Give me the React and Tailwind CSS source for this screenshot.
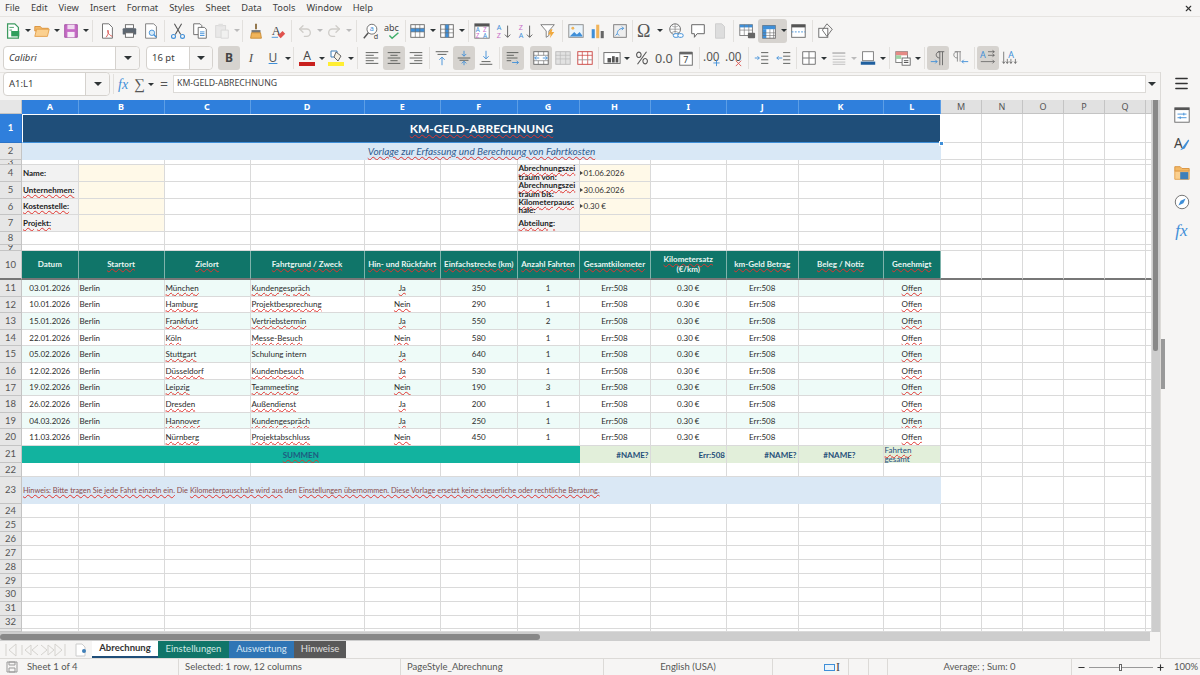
import React from 'react';
import { Undo2, Redo2, Minus, Plus, X, Menu } from 'lucide-react';

const BLUE = '#3f8fd8';
const INK = '#555753';

// toolbar icons, drawn on a 20x20 box
const icons = {
    new: <><path d="M4 2h8l4 4v12H4z" fill="#fff" stroke="#3d9a5f" strokeWidth="1.4" /><rect x="8" y="10" width="9" height="6" fill="#2f9e5b" /><path d="M6 6h5M6 9h3" stroke="#3d9a5f" /></>,
    open: <><path d="M2 5h6l2 2h7v3H2z" fill="#f2b866" stroke="#d9913a" /><path d="M2 16l2-8h14l-2 8z" fill="#fbd08f" stroke="#e3a04c" /></>,
    save: <><path d="M3 3h14v14H3z" fill="#c66bc6" stroke="#a14ea1" /><rect x="6" y="3" width="8" height="5" fill="#f0daf0" /><rect x="6" y="11" width="8" height="6" fill="#f7ecf7" /></>,
    pdf: <><path d="M5 2h7l4 4v12H5z" fill="#fff" stroke="#666" /><path d="M9 17c3-4 3-7 2-8-1 1 0 5 5 7" fill="none" stroke="#d9544f" /></>,
    print: <><rect x="6" y="3" width="9" height="4" fill="#fff" stroke="#666" /><rect x="3" y="7" width="15" height="7" rx="1" fill="#5c6670" /><rect x="6" y="12" width="9" height="5" fill="#fff" stroke="#666" /></>,
    preview: <><path d="M4 2h9l3 3v13H4z" fill="#fff" stroke="#777" /><circle cx="11" cy="12" r="3" fill="#d7ebf8" stroke="#3f8fd8" /><path d="M13 14l3 3" stroke="#3f8fd8" strokeWidth="1.5" /></>,
    cut: <><path d="M6 2l7 12M14 2L7 14" stroke="#555" strokeWidth="1.2" /><circle cx="5" cy="16" r="2.2" fill="none" stroke={BLUE} strokeWidth="1.2" /><circle cx="15" cy="16" r="2.2" fill="none" stroke={BLUE} strokeWidth="1.2" /></>,
    copy: <><path d="M3 2h7l2 2v10H3z" fill="#fff" stroke="#666" /><path d="M8 6h7l2 2v10H8z" fill="#fff" stroke="#666" /><path d="M10 11h5M10 13h5M10 15h5" stroke={BLUE} /></>,
    paste: <><rect x="3" y="4" width="11" height="13" fill="#ddd" stroke="#bbb" /><rect x="6" y="2" width="5" height="3" fill="#ccc" /><path d="M9 9h8v9H9z" fill="#eee" stroke="#bbb" /></>,
    clone: <><path d="M9 2h2v6H9z" fill="#8a6a3b" /><path d="M5 9h10v3H5z" fill="#777" /><path d="M5 12h10l1 6H4z" fill="#f0b45a" stroke="#c88a33" /></>,
    clear: <><text x="3" y="14" fontSize="14" fontFamily="Liberation Serif" fill="#444">A</text><path d="M10 15l5-5 3 3-5 5z" fill="#e0524d" /><path d="M3 17h7" stroke={BLUE} /></>,
    find: <><circle cx="11" cy="8" r="5.5" fill="#fff" stroke="#666" /><path d="M7 12l-5 6" stroke="#555" strokeWidth="1.6" /><text x="8.5" y="10.5" fontSize="8" fill={BLUE}>a</text><text x="13" y="19" fontSize="8" fill="#444">d</text></>,
    spell: <><text x="0" y="10" fontSize="10" fontFamily="Noto Sans" fill="#444">abc</text><path d="M6 15l3 3 7-6" fill="none" stroke="#3fae6a" strokeWidth="1.6" /></>,
    rows: <><rect x="2" y="3" width="15" height="14" fill="#fff" stroke="#666" /><rect x="2" y="7" width="15" height="4" fill={BLUE} /><path d="M7 3v14M12 3v14M2 7h15M2 11h15" stroke="#666" strokeWidth=".7" /></>,
    cols: <><rect x="3" y="3" width="14" height="14" fill="#fff" stroke="#666" /><rect x="8" y="3" width="4" height="14" fill={BLUE} /><path d="M8 3v14M12 3v14M3 8h14M3 12h14" stroke="#666" strokeWidth=".7" /></>,
    sort: <><rect x="2" y="2" width="16" height="16" fill="#fff" stroke="#777" /><rect x="2" y="2" width="16" height="3" fill="#555" /><text x="3" y="11" fontSize="7" fill={BLUE}>A</text><text x="11" y="11" fontSize="7" fill="#c86ec8">Z</text><text x="3" y="18" fontSize="7" fill="#c86ec8">Z</text><text x="11" y="18" fontSize="7" fill={BLUE}>A</text></>,
    asc: <><text x="2" y="9" fontSize="8" fill={BLUE}>A</text><text x="2" y="18" fontSize="8" fill="#c86ec8">Z</text><path d="M14 4v13m-3-3l3 3 3-3" fill="none" stroke="#666" strokeWidth="1.1" /></>,
    desc: <><text x="2" y="9" fontSize="8" fill="#c86ec8">Z</text><text x="2" y="18" fontSize="8" fill={BLUE}>A</text><path d="M14 4v13m-3-3l3 3 3-3" fill="none" stroke="#666" strokeWidth="1.1" /></>,
    filter: <><path d="M2 3h15l-6 7v5l-3 2v-7z" fill="#fff" stroke="#777" /><path d="M13 8l-3 6h3l-1 4 5-7h-3l1-3z" fill="#f0a93e" /></>,
    image: <><rect x="2" y="3" width="16" height="14" fill="#eaf4fb" stroke="#888" /><circle cx="6.5" cy="7" r="1.6" fill="#f0b45a" /><path d="M3 16l5-5 3 3 3-3 3 4v1z" fill={BLUE} /></>,
    chart: <><rect x="3" y="8" width="3.4" height="10" fill={BLUE} /><rect x="8" y="3" width="3.4" height="15" fill="#f0b45a" /><rect x="13" y="10" width="3.4" height="8" fill="#666" /></>,
    pivot: <><rect x="3" y="3" width="14" height="14" fill="#eee" stroke="#777" /><path d="M7 13c0-4 3-6 7-6" fill="none" stroke={BLUE} /><path d="M12 5l2 2-2 2M9 15l-2-2-2 2" fill="none" stroke={BLUE} /></>,
    omega: <text x="1" y="17" fontSize="20" fontFamily="Liberation Serif" fill="#555">Ω</text>,
    link: <><circle cx="9" cy="8" r="6" fill="#fff" stroke="#666" /><path d="M3 8h12M9 2v12M5 4c3 2 5 2 8 0M5 12c3-2 5-2 8 0" stroke="#666" strokeWidth=".6" fill="none" /><rect x="7" y="13" width="6" height="4" rx="2" fill="#fff" stroke={BLUE} strokeWidth="1.1" /><rect x="12" y="13" width="6" height="4" rx="2" fill="#fff" stroke={BLUE} strokeWidth="1.1" /></>,
    comment: <path d="M3 3h14v10H9l-3 4v-4H3z" fill="#fff" stroke="#666" strokeWidth="1.1" />,
    header: <path d="M5 2h7l3 3v13H5z" fill="#ddd" stroke="#ccc" />,
    printarea: <><rect x="2" y="3" width="14" height="12" fill="#fff" stroke="#777" /><rect x="2" y="3" width="14" height="3" fill={BLUE} /><path d="M7 3v12M12 3v12M2 9h14" stroke="#777" strokeWidth=".7" /><rect x="11" y="12" width="8" height="6" rx="1" fill="#666" /></>,
    freeze: <><rect x="3" y="4" width="14" height="14" fill="#fff" stroke="#666" /><rect x="3" y="8" width="4" height="10" fill={BLUE} /><rect x="3" y="4" width="14" height="4" fill={BLUE} /><path d="M11 8v10M15 8v10M3 12h14M3 15h14" stroke="#666" strokeWidth=".6" /></>,
    split: <><rect x="3" y="3" width="15" height="14" fill="#fff" stroke="#666" /><rect x="3" y="3" width="15" height="3" fill="#555" /><path d="M3 11h15" stroke={BLUE} strokeDasharray="2 1.5" /></>,
    shapes: <><rect x="2" y="7" width="10" height="10" fill="#fff" stroke="#666" /><path d="M11 2l6 6-6 8-5-7z" fill="none" stroke="#666" /></>,
    alignL: <path d="M3 4h14M3 7h9M3 10h14M3 13h9M3 16h14" stroke={INK} />,
    alignC: <path d="M3 4h14M6 7h8M3 10h14M6 13h8M3 16h14" stroke={INK} />,
    alignR: <path d="M3 4h14M8 7h9M3 10h14M8 13h9M3 16h14" stroke={INK} />,
    top: <><path d="M3 3h14M5 6h10" stroke={INK} /><path d="M10 18V9m-3 3l3-3 3 3" fill="none" stroke={BLUE} /></>,
    middle: <><path d="M3 10h14M5 12.5h10" stroke={INK} /><path d="M10 2v6M7.5 5.5L10 8l2.5-2.5M10 18v-4M7.5 16l2.5-2.5 2.5 2.5" fill="none" stroke={BLUE} /></>,
    bottom: <><path d="M3 17h14M5 14h10" stroke={INK} /><path d="M10 2v9M7 8l3 3 3-3" fill="none" stroke={BLUE} /></>,
    wrap: <><path d="M3 4h13M3 7h8M3 10h12M3 13h5" stroke={INK} /><path d="M9 15h7l-2-2m2 2l-2 2" fill="none" stroke={BLUE} /></>,
    merge: <><rect x="2" y="3" width="16" height="14" fill="#fff" stroke="#666" /><path d="M2 7h16M2 13h16M7 3v4M13 3v4M7 13v4M13 13v4" stroke="#666" strokeWidth=".7" /><path d="M3 10h5M17 10h-5M5 8l-2 2 2 2M15 8l2 2-2 2" fill="none" stroke={BLUE} /></>,
    unmerge: <><rect x="2" y="3" width="16" height="14" fill="#e2e2e2" stroke="#bbb" /><path d="M2 7h16M2 11h16M7 3v14M13 3v14" stroke="#bbb" strokeWidth=".8" /></>,
    redgrid: <><rect x="2" y="3" width="16" height="14" fill="#fff" stroke="#c9413e" /><path d="M2 7h16M7 3v14M13 3v14" stroke="#c9413e" strokeWidth=".8" /><path d="M2 12h16" stroke="#999" /></>,
    currency: <><rect x="1" y="4" width="18" height="12" fill="#fff" stroke="#666" /><rect x="5" y="10" width="4" height="5" fill="#555" /><rect x="10" y="8" width="3" height="7" fill="#555" /><rect x="14" y="9" width="3" height="6" fill="#555" /></>,
    percent: <path d="M15 3L5 17M6.5 3.5a2.5 3 0 1 0 .01 0M13.5 10.5a2.5 3 0 1 0 .01 0" fill="none" stroke="#555" strokeWidth="1.2" />,
    number: <text x="0" y="15.5" fontSize="14" fontFamily="Noto Sans" fill="#555">0.0</text>,
    date: <><rect x="3" y="4" width="14" height="14" fill="#fff" stroke="#666" /><rect x="3" y="3" width="14" height="3" fill="#666" /><text x="7" y="16" fontSize="10" fill="#444">7</text></>,
    addDec: <><text x="0" y="13" fontSize="13" fontFamily="Noto Sans" fill="#555">.00</text><path d="M15 12v7M11.5 15.5h7" stroke={BLUE} /></>,
    delDec: <><text x="0" y="13" fontSize="13" fontFamily="Noto Sans" fill="#555">.00</text><path d="M12 13l6 6M18 13l-6 6" stroke="#d9544f" /></>,
    indent: <><path d="M9 4h8M9 8h8M9 12h8M9 16h8" stroke={INK} /><path d="M2 10h5m-2-2l2 2-2 2" fill="none" stroke={BLUE} /></>,
    outdent: <><path d="M9 4h8M9 8h8M9 12h8M9 16h8" stroke={INK} /><path d="M8 10H2m2-2l-2 2 2 2" fill="none" stroke={BLUE} /></>,
    borders: <path d="M3 3h14v14H3zM10 3v14M3 10h14" fill="#fff" stroke="#777" strokeWidth="1.1" />,
    borderStyle: <path d="M3 4h14M3 4v1h14M3 8h14M3 11.5h14M3 14.5h14M3 17h14" stroke="#bbb" fill="none" />,
    borderColor: <><rect x="4" y="3" width="12" height="10" fill="#fff" stroke="#777" /><rect x="2" y="14" width="16" height="3.5" fill="#1f5f9e" /></>,
    cond: <><rect x="2" y="3" width="13" height="12" fill="#fff" stroke="#777" /><rect x="2" y="3" width="13" height="4" fill="#e58a85" /><rect x="2" y="7" width="6" height="4" fill="#9fd3a5" /><rect x="9" y="10" width="9" height="8" fill="#fff" stroke="#666" /><path d="M11 13h5M11 15h5" stroke="#444" /></>,
    ltr: <><path d="M10 3h7M12 3v15M15 3v15M12 3c-3 0-4 2-4 3.5S9 10 12 10" fill="none" stroke="#666" /><path d="M2 14h7m-2-2l2 2-2 2" fill="none" stroke={BLUE} /></>,
    rtl: <><path d="M3 3h7M6 3v11M9 3v11M6 3C3 3 2 5 2 6.5S3 10 6 10" fill="none" stroke="#888" /><path d="M18 14h-7m2-2l-2 2 2 2" fill="none" stroke={BLUE} /></>,
    textH: <><text x="1" y="10" fontSize="10" fontFamily="Noto Sans" fill={BLUE}>A</text><path d="M10 3h7m-2-1.5L17 3l-2 1.5M10 7h7m-2-1.5L17 7l-2 1.5M2 14h15m-2-2l2 2-2 2" fill="none" stroke="#555" strokeWidth=".8" /></>,
    textV: <><text x="8" y="10" fontSize="10" fontFamily="Noto Sans" fill={BLUE}>A</text><path d="M3 3v13m-1.5-2L3 16l1.5-2M7 11v5m-1.5-2L7 16l1.5-2M11 11v5m-1.5-2l1.5 2 1.5-2M16 11v5m-1.5-2l1.5 2 1.5-2" fill="none" stroke="#555" strokeWidth=".8" /></>,
    sideProps: <><rect x="2" y="2" width="16" height="16" fill="#fff" stroke="#666" /><rect x="2" y="2" width="16" height="2.5" fill="#555" /><path d="M5 9h10M5 13h10" stroke={BLUE} /><path d="M12 7.5v3M8 11.5v3" stroke={BLUE} /></>,
    sideStyles: <><text x="1" y="14" fontSize="15" fontFamily="Noto Sans" fill="#444">A</text><path d="M8 17l3-4 6-8 1 1-5 9z" fill={BLUE} /></>,
    sideGallery: <><path d="M2 3h6l2 2h8v3H2z" fill="#f2b866" stroke="#d9913a" /><path d="M2 8h16v9H2z" fill="#fbd08f" stroke="#e3a04c" /><rect x="8" y="9" width="9" height="8" fill="#3f7fb8" /></>,
    sideNav: <><circle cx="10" cy="10" r="7.5" fill="#fff" stroke="#666" /><path d="M14 6l-2.5 5.5L6 14l2.5-5.5z" fill={BLUE} /></>,
};

const Icon = ({ name, size = 18 }) => (
    <svg width={size} height={size} viewBox="0 0 20 20">{icons[name]}</svg>
);

const Btn = ({ name, active, muted }) => (
    <div className={`flex h-[24px] w-[22px] shrink-0 items-center justify-center rounded-[3px] ${active ? 'bg-[#d6d3cf]' : ''} ${muted ? 'opacity-50' : ''}`}>
        <Icon name={name} />
    </div>
);

const Arrow = ({ muted }) => (
    <div className="flex w-[7px] shrink-0 justify-center">
        <div className={`h-0 w-0 border-x-[3px] border-t-[3px] border-x-transparent ${muted ? 'border-t-[#bbb]' : 'border-t-[#2e3436]'}`} />
    </div>
);

const Sep = ({ w = 'w-[5px]' }) => (
    <div className={`flex h-[22px] shrink-0 justify-center ${w}`}>
        <div className="h-full w-px bg-[#e2e0dd]" />
    </div>
);

const Combo = ({ text, width, dropWidth, italic }) => (
    <div className={`flex h-[24px] shrink-0 rounded-[4px] border border-[#d5d2ce] bg-white ${width}`}>
        <div className={`flex flex-1 items-center pl-[5px] text-[9.5px] text-[#3d3d3d] ${italic ? 'italic' : ''}`}>{text}</div>
        <div className={`flex items-center justify-center rounded-r-[4px] border-l border-[#d5d2ce] bg-[#f6f5f4] ${dropWidth}`}>
            <div className="h-0 w-0 border-x-[4px] border-t-[4px] border-x-transparent border-t-[#2e3436]" />
        </div>
    </div>
);

const MenuBar = () => (
    <div className="flex h-[17px] items-center gap-[11px] border-b border-[#e6e4e1] pl-[5px] text-[9.3px] text-[#3d3d3d]">
        {['File', 'Edit', 'View', 'Insert', 'Format', 'Styles', 'Sheet', 'Data', 'Tools', 'Window', 'Help'].map((m) => (
            <span key={m}>{m}</span>
        ))}
        <X size={9} strokeWidth={3} className="ml-auto mr-[7px] text-[#333]" />
    </div>
);

const StandardBar = () => (
    <div className="flex h-[27px] items-center pl-[2px]">
        <Btn name="new" /><Arrow /><Btn name="open" /><Arrow /><Btn name="save" /><Arrow /><Sep w="w-[7px]" />
        <Btn name="pdf" /><Btn name="print" /><Btn name="preview" /><Sep />
        <Btn name="cut" /><Btn name="copy" /><Btn name="paste" muted /><Arrow muted /><Sep />
        <Btn name="clone" /><Btn name="clear" /><Sep />
        <div className="flex h-[24px] w-[22px] shrink-0 items-center justify-center text-[#cfcdc9]"><Undo2 size={16} /></div><Arrow muted />
        <div className="flex h-[24px] w-[22px] shrink-0 items-center justify-center text-[#cfcdc9]"><Redo2 size={16} /></div><Arrow muted /><Sep w="w-[8px]" />
        <Btn name="find" /><Btn name="spell" /><Sep w="w-[3px]" />
        <Btn name="rows" /><Arrow /><Btn name="cols" /><Arrow /><Sep w="w-[6px]" />
        <Btn name="sort" /><Btn name="asc" /><Btn name="desc" /><Btn name="filter" /><Sep w="w-[6px]" />
        <Btn name="image" /><Btn name="chart" /><Btn name="pivot" /><Sep w="w-[3px]" />
        <Btn name="omega" /><Arrow /><div className="w-[2px] shrink-0" />
        <Btn name="link" /><Btn name="comment" /><Btn name="header" /><Sep />
        <Btn name="printarea" />
        <div className="flex h-[24px] shrink-0 items-center rounded-[3px] bg-[#d6d3cf]"><Btn name="freeze" /><Arrow /></div>
        <Btn name="split" /><Sep w="w-[6px]" />
        <Btn name="shapes" />
    </div>
);

const FormatBar = () => (
    <div className="flex h-[28px] items-center pl-[3px]">
        <Combo text="Calibri" width="w-[137px]" dropWidth="w-[24px]" italic />
        <div className="w-[6px] shrink-0" />
        <Combo text="16 pt" width="w-[67px]" dropWidth="w-[23px]" />
        <div className="w-[5px] shrink-0" />
        <div className="flex h-[24px] w-[22px] shrink-0 items-center justify-center rounded-[3px] bg-[#d6d3cf] text-[12px] font-bold text-[#444]">B</div>
        <div className="flex h-[24px] w-[22px] shrink-0 items-center justify-center font-['Liberation_Serif',serif] text-[13px] italic text-[#555]">I</div>
        <div className="flex h-[24px] w-[22px] shrink-0 items-center justify-center text-[12px] text-[#555] underline decoration-[#3f8fd8]">U</div>
        <Arrow /><Sep w="w-[5px]" />
        <div className="flex h-[24px] w-[22px] shrink-0 flex-col items-center justify-center">
            <span className="text-[12px] leading-[12px] text-[#444]">A</span>
            <div className="h-[4px] w-[16px] bg-[#c9211e]" />
        </div>
        <Arrow />
        <div className="flex h-[24px] w-[22px] shrink-0 flex-col items-center justify-center">
            <svg width="16" height="12" viewBox="0 0 16 12"><path d="M3 1h6v6H3z" fill="#fff" stroke="#3f7fb8" /><path d="M8 2l5 4-3 5-4-4z" fill="#f3efe2" stroke="#666" /></svg>
            <div className="h-[4px] w-[16px] bg-[#ffee33]" />
        </div>
        <Arrow /><Sep w="w-[7px]" />
        <Btn name="alignL" /><Btn name="alignC" active /><Btn name="alignR" /><Sep w="w-[4px]" />
        <Btn name="top" /><Btn name="middle" active /><Btn name="bottom" /><Sep w="w-[5px]" />
        <Btn name="wrap" active /><div className="w-[6px] shrink-0" /><Btn name="merge" active /><Btn name="unmerge" /><Btn name="redgrid" /><Sep w="w-[5px]" />
        <Btn name="currency" /><Arrow /><div className="w-[1px] shrink-0" />
        <Btn name="percent" /><Btn name="number" /><Btn name="date" /><Sep w="w-[4px]" />
        <Btn name="addDec" /><Btn name="delDec" /><Sep w="w-[6px]" />
        <Btn name="indent" /><Btn name="outdent" /><Sep w="w-[3px]" />
        <Btn name="borders" /><Arrow /><div className="w-[1px] shrink-0" /><Btn name="borderStyle" /><Arrow muted />
        <Btn name="borderColor" /><Arrow /><Sep w="w-[6px]" />
        <Btn name="cond" /><Arrow /><Sep w="w-[6px]" />
        <Btn name="ltr" active /><div className="w-[1px] shrink-0" /><Btn name="rtl" /><Sep w="w-[5px]" />
        <Btn name="textH" active /><Btn name="textV" />
    </div>
);

const FormulaBar = () => (
    <div className="flex h-[28px] items-center border-t border-[#e6e4e1] pb-[5px] pl-[3px]">
        <Combo text="A1:L1" width="w-[107px]" dropWidth="w-[24px]" />
        <div className="ml-[3px] h-[20px] w-px bg-[#e2e0dd]" />
        <span className="ml-[4px] w-[14px] font-['Liberation_Serif',serif] text-[14px] italic text-[#3f8fd8]">fx</span>
        <span className="ml-[2px] w-[13px] font-['Liberation_Serif',serif] text-[15px] text-[#555]">∑</span>
        <Arrow />
        <span className="ml-[1px] w-[18px] text-center text-[14px] leading-none text-[#555]">=</span>
        <div className="flex h-[18px] w-[973px] shrink-0 items-center border border-[#dcdad7] bg-white pl-[3px] text-[8.7px] text-[#444]">KM-GELD-ABRECHNUNG</div>
        <div className="ml-[2px] flex w-[8px] justify-center">
            <div className="h-0 w-0 border-x-[4px] border-t-[4px] border-x-transparent border-t-[#2e3436]" />
        </div>
    </div>
);

// spell checker squiggle
const Sq = ({ children }) => (
    <span className="underline decoration-[#e0342f] decoration-wavy decoration-[0.7px] underline-offset-[0.5px]">{children}</span>
);

const line = 'border-r border-b border-[#dadada]';
const blank = `${line} bg-white`;
const colLetters = ['A', 'B', 'C', 'D', 'E', 'F', 'G', 'H', 'I', 'J', 'K', 'L'];
const spareLetters = ['M', 'N', 'O', 'P', 'Q', ''];

const trips = [
    ['03.01.2026', 'München', 'Kundengespräch', 'Ja', '350', '1'],
    ['10.01.2026', 'Hamburg', 'Projektbesprechung', 'Nein', '290', '1'],
    ['15.01.2026', 'Frankfurt', 'Vertriebstermin', 'Ja', '550', '2'],
    ['22.01.2026', 'Köln', 'Messe-Besuch', 'Nein', '580', '1'],
    ['05.02.2026', 'Stuttgart', 'Schulung intern', 'Ja', '640', '1'],
    ['12.02.2026', 'Düsseldorf', 'Kundenbesuch', 'Ja', '530', '1'],
    ['19.02.2026', 'Leipzig', 'Teammeeting', 'Nein', '190', '3'],
    ['26.02.2026', 'Dresden', 'Außendienst', 'Ja', '200', '1'],
    ['04.03.2026', 'Hannover', 'Kundengespräch', 'Ja', '250', '1'],
    ['11.03.2026', 'Nürnberg', 'Projektabschluss', 'Nein', '450', '1'],
];

const headers = [
    'Datum', <Sq key="s">Startort</Sq>, <Sq key="z">Zielort</Sq>, <Sq key="f">Fahrtgrund / Zweck</Sq>,
    <Sq key="h">Hin- und Rückfahrt</Sq>, <Sq key="e">Einfachstrecke (km)</Sq>, <Sq key="a">Anzahl Fahrten</Sq>,
    <Sq key="g">Gesamtkilometer</Sq>, <><Sq>Kilometersatz</Sq><br />(€/km)</>, <Sq key="b">km-Geld Betrag</Sq>,
    <Sq key="n">Beleg / Notiz</Sq>, <Sq key="o">Genehmigt</Sq>,
];

const RowHead = ({ n, active, bottom }) => (
    <div className={`flex items-center justify-center overflow-hidden border-r text-[9.5px] leading-none ${active ? 'border-[#2b74c9] bg-[#2f7fdc] font-bold text-white' : 'border-[#c4c4c4] bg-[#e6e6e6] text-[#555]'} ${bottom ? 'border-b-2 border-b-[#777]' : 'border-b'}`}>
        {n}
    </div>
);

const Spare = ({ dark }) => (
    <>
        {spareLetters.map((l) => <div key={l} className={`border-r bg-white ${dark ? 'border-r-[#dadada] border-b-2 border-b-[#777]' : 'border-b border-[#dadada]'}`} />)}
    </>
);

const InfoRow = ({ n, label, glabel, value }) => (
    <>
        <RowHead n={n} />
        <div className={`${line} flex items-center overflow-hidden bg-[#f2f2f2] pl-px font-bold text-[#222]`}>{label}</div>
        <div className={`${line} bg-[#fff9e8]`} />
        <div className={blank} />
        <div className={blank} />
        <div className={blank} />
        <div className={blank} />
        <div className={`${line} flex items-center overflow-hidden bg-[#f2f2f2] pl-px font-bold leading-[8.5px] text-[#222]`}><div>{glabel}</div></div>
        <div className={`${line} flex items-center bg-[#fff9e8] text-[#333]`}>
            {value && <div className="mr-px h-0 w-0 border-y-[2.5px] border-l-[3px] border-y-transparent border-l-[#444]" />}
            {value}
        </div>
        <div className={blank} />
        <div className={blank} />
        <div className={blank} />
        <div className={blank} />
        <Spare />
    </>
);

const EmptyRow = ({ n }) => (
    <>
        <RowHead n={n} />
        {colLetters.map((l) => <div key={l} className={blank} />)}
        <Spare />
    </>
);

const Sheet = () => {
    const center = `flex items-center justify-center overflow-hidden whitespace-nowrap ${line}`;
    const left = `flex items-center overflow-hidden whitespace-nowrap pl-px ${line}`;
    const total = 'flex items-center justify-end border-r border-[#dadada] bg-[#e2efda] font-bold text-[#1f4e79]';
    return (
        <div className="relative grid h-[532px] grid-cols-[22px_56.5px_86px_86px_114px_76.5px_76.5px_62px_71px_76.5px_71.5px_85px_57.5px_41px_41px_41px_41px_41px_1fr] grid-rows-[14px_29px_17px_4.5px_17px_17px_16.5px_16.5px_13px_6px_29.5px_repeat(10,16.6px)_17.5px_13.5px_27.5px_repeat(9,13.9px)_1fr] overflow-hidden bg-white font-['Lato',sans-serif] text-[8px] text-[#2b2b2b]">
            {/* column headers */}
            <div className="border-r border-b border-[#c4c4c4] bg-[#e6e6e6]" />
            {colLetters.map((l) => (
                <div key={l} className="flex items-center justify-center border-r border-[#5c9ee6] bg-[#2f7fdc] font-['Noto_Sans',sans-serif] text-[9px] font-bold text-white">{l}</div>
            ))}
            {spareLetters.map((l) => (
                <div key={l} className="flex items-center justify-center border-r border-b border-[#c4c4c4] bg-[#e1e1e1] font-['Noto_Sans',sans-serif] text-[9px] text-[#555]">{l}</div>
            ))}

            {/* title */}
            <RowHead n="1" active />
            <div className="col-span-12 flex items-center justify-center border border-white border-b-[#3f8fd8] bg-[#1f4e79] text-[12px] font-bold text-white">
                <Sq>KM-GELD-ABRECHNUNG</Sq>
            </div>
            <Spare />

            <RowHead n="2" />
            <div className="col-span-12 flex items-center justify-center bg-[#d9e8f6] text-[10px] italic text-[#2f5c8f]">
                <Sq>Vorlage zur Erfassung und Berechnung von Fahrtkosten</Sq>
            </div>
            <Spare />

            <EmptyRow n="3" />
            <InfoRow n="4" label="Name:" glabel={<><Sq>Abrechnungszei</Sq><br /><Sq>traum von:</Sq></>} value="01.06.2026" />
            <InfoRow n="5" label={<Sq>Unternehmen:</Sq>} glabel={<><Sq>Abrechnungszei</Sq><br /><Sq>traum bis:</Sq></>} value="30.06.2026" />
            <InfoRow n="6" label={<Sq>Kostenstelle:</Sq>} glabel={<><Sq>Kilometerpausc</Sq><br /><Sq>hale:</Sq></>} value="0.30 €" />
            <InfoRow n="7" label={<Sq>Projekt:</Sq>} glabel={<Sq>Abteilung:</Sq>} />
            <EmptyRow n="8" />
            <EmptyRow n="9" />

            {/* table header */}
            <RowHead n="10" bottom />
            {headers.map((h, i) => (
                <div key={colLetters[i]} className="flex items-center justify-center overflow-hidden whitespace-nowrap border-r border-b-2 border-r-[#7fb3ab] border-b-[#777] bg-[#107569] text-center font-bold leading-[10px] text-[#e8f5f2]">
                    <div>{h}</div>
                </div>
            ))}
            <Spare dark />

            {/* trips */}
            {trips.map((t, i) => {
                const bg = i % 2 === 0 ? 'bg-[#eefbf8]' : 'bg-white';
                return (
                    <React.Fragment key={t[0]}>
                        <RowHead n={11 + i} />
                        <div className={`${center} ${bg}`}>{t[0]}</div>
                        <div className={`${left} ${bg}`}>Berlin</div>
                        <div className={`${left} ${bg}`}><Sq>{t[1]}</Sq></div>
                        <div className={`${left} ${bg}`}>{t[2] === 'Schulung intern' ? t[2] : <Sq>{t[2]}</Sq>}</div>
                        <div className={`${center} ${bg}`}><Sq>{t[3]}</Sq></div>
                        <div className={`${center} ${bg}`}>{t[4]}</div>
                        <div className={`${center} ${bg}`}>{t[5]}</div>
                        <div className={`${center} ${bg}`}>Err:508</div>
                        <div className={`${center} ${bg}`}>0.30 €</div>
                        <div className={`${center} ${bg}`}>Err:508</div>
                        <div className={`${center} ${bg}`} />
                        <div className={`${center} ${bg}`}><Sq>Offen</Sq></div>
                        <Spare />
                    </React.Fragment>
                );
            })}

            {/* totals */}
            <RowHead n="21" />
            <div className="col-span-7 flex items-center justify-center bg-[#12b39f] font-bold text-[#1f5a80]"><Sq>SUMMEN</Sq></div>
            <div className={`${total} pr-px`}>#NAME?</div>
            <div className={`${total} pr-px`}>Err:508</div>
            <div className={`${total} pr-px`}>#NAME?</div>
            <div className={`${total} pr-[27px]`}>#NAME?</div>
            <div className="flex items-center border-r border-[#dadada] bg-[#e2efda] pl-px leading-[8.5px] text-[#1f4e79]"><div><Sq>Fahrten</Sq><br /><Sq>gesamt</Sq></div></div>
            <Spare />

            <EmptyRow n="22" />

            <RowHead n="23" />
            <div className="col-span-12 flex items-center overflow-hidden whitespace-nowrap bg-[#dae8f5] pl-px text-[7.4px] text-[#8a4a4a]">
                <Sq>Hinweis: Bitte tragen Sie jede Fahrt einzeln ein.</Sq>&nbsp;Die&nbsp;<Sq>Kilometerpauschale wird aus</Sq>&nbsp;den&nbsp;<Sq>Einstellungen übernommen. Diese Vorlage ersetzt keine steuerliche oder rechtliche Beratung.</Sq>
            </div>
            <Spare />

            {[24, 25, 26, 27, 28, 29, 30, 31, 32].map((n) => <EmptyRow key={n} n={n} />)}
            <EmptyRow n="" />

            {/* selection handle */}
            <div className="absolute left-[938.5px] top-[40.5px] h-[5px] w-[5px] border border-white bg-[#3f8fd8]" />
        </div>
    );
};

const SheetTabs = () => (
    <div className="flex h-[17px] items-stretch bg-[#f6f5f4] font-['Lato',sans-serif] text-[9.5px]">
        <div className="flex w-[70px] items-center pl-[5px]">
            <svg width="61" height="14" viewBox="0 0 61 14" fill="none" stroke="#d5d3cf">
                <path d="M1 1v12M11 1L4 7l7 6zM17 2v10M26 2l-6 5 6 5zM33 2l-6 5 6 5M36 2l6 5-6 5M43 2l6 5-6 5v-10zM50 1l7 6-7 6zM60 1v12" />
            </svg>
        </div>
        <div className="flex w-[22px] items-center justify-center">
            <svg width="12" height="14" viewBox="0 0 12 14"><path d="M1 1h6l3 3v9H1z" fill="#fff" stroke="#ccc" /><circle cx="9" cy="8" r="2" fill="#3f7fb8" /></svg>
        </div>
        <div className="flex w-[66px] items-center justify-center border-b-2 border-[#1f4e79] bg-white font-bold text-[#333]">Abrechnung</div>
        <div className="flex w-[71px] items-center justify-center bg-[#107569] text-[#cfe9e4]">Einstellungen</div>
        <div className="flex w-[65px] items-center justify-center bg-[#2f75b5] text-[#d8e8f6]">Auswertung</div>
        <div className="flex w-[52px] items-center justify-center bg-[#595959] text-[#e0e0e0]">Hinweise</div>
    </div>
);

const StatusCell = ({ width, children, center }) => (
    <div className={`flex h-full shrink-0 items-center border-r border-[#dcdad7] ${center ? 'justify-center' : 'pl-[6px]'} ${width}`}>{children}</div>
);

const StatusBar = () => (
    <div className="flex h-[17px] items-center border-t border-[#dcdad7] bg-[#f6f5f4] font-['Lato',sans-serif] text-[9.5px] text-[#555]">
        <StatusCell width="w-[179px]">
            <svg width="12" height="12" viewBox="0 0 12 12" className="mr-[9px]"><path d="M1 1h10v10H1z" fill="none" stroke="#999" /><path d="M3 1h6v3H3zM3 7h6v4H3z" fill="none" stroke="#999" /></svg>
            Sheet 1 of 4
        </StatusCell>
        <StatusCell width="w-[222px]">Selected: 1 row, 12 columns</StatusCell>
        <StatusCell width="w-[203px]">PageStyle_Abrechnung</StatusCell>
        <StatusCell width="w-[169px]" center>English (USA)</StatusCell>
        <StatusCell width="w-[76px]">
            <div className="ml-[45px] h-[7px] w-[11px] border border-[#3f8fd8] bg-[#eaf4fb]" />
            <span className="ml-[1px] font-['Liberation_Serif',serif] text-[12px] leading-none text-[#444]">I</span>
        </StatusCell>
        <StatusCell width="w-[20px]" />
        <StatusCell width="w-[19px]" />
        <StatusCell width="w-[184px]" center>Average: ; Sum: 0</StatusCell>
        <div className="flex flex-1 items-center pl-[5px]">
            <Minus size={9} strokeWidth={3} className="text-[#333]" />
            <div className="relative mx-[3px] h-px w-[64px] bg-[#999]">
                <div className="absolute left-[30px] top-[-3px] h-[7px] w-[3px] border border-[#666] bg-white" />
            </div>
            <Plus size={9} strokeWidth={3} className="text-[#333]" />
            <span className="ml-[9px]">100%</span>
        </div>
    </div>
);

const Sidebar = () => (
    <div className="relative flex w-[39px] shrink-0 flex-col items-center gap-[11px] pl-[2px] pt-[3px]">
        <Menu size={17} strokeWidth={2} className="text-[#333]" />
        <div className="mt-[3px]"><Icon name="sideProps" /></div>
        <Icon name="sideStyles" />
        <Icon name="sideGallery" />
        <Icon name="sideNav" />
        <span className="font-['Liberation_Serif',serif] text-[17px] italic leading-[18px] text-[#3f8fd8]">fx</span>
        {/* deck collapse handle */}
        <div className="absolute left-0 top-[267px] h-[50px] w-[4px] bg-[#999]" />
    </div>
);

export default function App() {
    return (
        <div className="flex h-[675px] w-[1200px] flex-col overflow-hidden bg-[#f6f5f4] font-['Noto_Sans',sans-serif] text-[#3d3d3d]">
            <MenuBar />
            <StandardBar />
            <FormatBar />
            <div className="flex min-h-0 flex-1">
                <div className="flex w-[1161px] shrink-0 flex-col border-r border-[#dcdad7]">
                    <FormulaBar />
                    <div className="flex">
                        <div className="w-[1152px] shrink-0"><Sheet /></div>
                        {/* vertical scrollbar */}
                        <div className="h-[532px] w-[9px] bg-[#cdcdcd] pl-[1px]">
                            <div className="h-[251px] w-[5px] rounded-b-[2px] bg-[#888]" />
                        </div>
                    </div>
                    {/* horizontal scrollbar */}
                    <div className="flex h-[9px] w-[1150px] items-center bg-[#cdcdcd]">
                        <div className="h-[6px] w-[540px] rounded-[3px] bg-[#888]" />
                    </div>
                    <SheetTabs />
                </div>
                <Sidebar />
            </div>
            <StatusBar />
        </div>
    );
}
